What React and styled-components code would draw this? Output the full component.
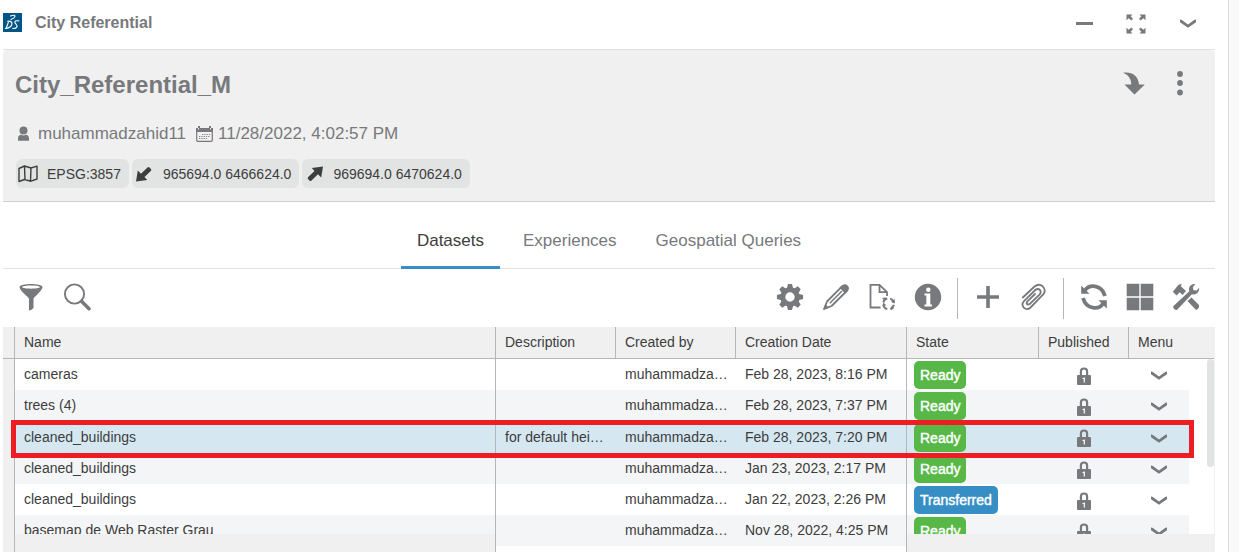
import React from "react";
import styled, { createGlobalStyle } from "styled-components";

const GlobalStyle = createGlobalStyle`
  *, *::before, *::after { box-sizing: border-box; }
  body {
    margin: 0;
    background: #f9f9f9;
    color: #3d3d3d;
    font-family: "Liberation Sans", Arial, sans-serif;
  }
`;

const Page = styled.div`
  display: flex;
  height: 100vh;
  padding-right: 10px;
  overflow: hidden;
`;

const Widget = styled.main`
  flex: 1;
  min-width: 0;
  display: flex;
  flex-direction: column;
  padding: 0 13px 0 3px;
  background: #fff;
  border-right: 1px solid #dcdcde;
`;

const TitleBar = styled.header`
  display: flex;
  align-items: center;
  height: 50px;
  padding: 0 4px 4px 0;
  border-bottom: 1px solid #e0e0e1;
`;

const WidgetTitle = styled.h1`
  flex: 1;
  margin: 0 0 0 13px;
  font-size: 16px;
  line-height: 20px;
  color: #77797c;
`;

const IconButton = styled.button`
  display: flex;
  align-items: center;
  justify-content: center;
  width: ${(p) => p.$width || 46}px;
  height: ${(p) => p.$height || 30}px;
  padding: 0;
  border: 0;
  background: none;
  color: #77797c;
  cursor: pointer;
`;

const WindowActions = styled.div`
  display: flex;
  gap: 6px;
  padding-top: 2px;
`;

const Summary = styled.section`
  padding: 17px 12px 13px;
  background: #f0f0f0;
  border-bottom: 1px solid #d0d0d2;
  border-radius: 4px 4px 0 0;
`;

const SummaryHead = styled.div`
  display: flex;
  align-items: center;
  height: 32px;
`;

const SummaryTitle = styled.h2`
  flex: 1;
  margin: 0;
  padding-top: 4px;
  font-size: 24px;
  line-height: 32px;
  color: #77797c;
`;

const Meta = styled.div`
  display: flex;
  align-items: center;
  height: 24px;
  margin-top: 23px;
  font-size: 17px;
  line-height: 24px;
  color: #77797c;
`;

const MetaItem = styled.span`
  display: flex;
  align-items: center;
  gap: 5px;
  margin-right: 10px;
`;

const Chips = styled.div`
  display: flex;
  gap: 3px;
  margin: 13px 0 0 1px;
`;

const Chip = styled.span`
  display: flex;
  align-items: center;
  gap: 9px;
  height: 29px;
  padding: 0 8px 0 2px;
  border-radius: 6px;
  background: #e2e4e3;
  font-size: 14px;
  line-height: 16px;
`;

const Tabs = styled.nav`
  display: flex;
  justify-content: center;
  gap: 7px;
  height: 67px;
  border-bottom: 1px solid #e0e0e1;
`;

const Tab = styled.button`
  height: 67px;
  padding: 14px 16px 0;
  border: 0;
  border-bottom: 3px solid ${(p) => (p.$active ? "#368ec4" : "transparent")};
  background: none;
  color: ${(p) => (p.$active ? "#3d3d3d" : "#77797c")};
  font: 17px/20px "Liberation Sans", Arial, sans-serif;
  cursor: pointer;
`;

const Toolbar = styled.div`
  display: flex;
  align-items: center;
  justify-content: space-between;
  height: 58px;
  padding: 0 6px 2px 5px;
`;

const ToolGroup = styled.div`
  display: flex;
  align-items: center;
`;

const Divider = styled.span`
  width: 1px;
  height: 41px;
  margin: 3px 7px 0 6px;
  background: #b4b6ba;
`;

const Grid = styled.div`
  position: relative;
  flex: 1;
  min-height: 0;
  display: flex;
  overflow: hidden;
  border-right: 1px solid #f0f0f0;
`;

const Gutter = styled.div`
  flex: 0 0 12px;
  background: #f0f0f0;
  border-right: 1px solid #b4b6ba;

  &::before {
    content: "";
    display: block;
    height: 32px;
    border-bottom: 1px solid #b4b6ba;
  }
`;

const GridBody = styled.div`
  flex: 1;
  min-width: 0;
`;

const Table = styled.table`
  width: 100%;
  table-layout: fixed;
  border-collapse: separate;
  border-spacing: 0;
  font-size: 14px;
  line-height: 16px;
`;

const HeadCell = styled.th`
  height: 32px;
  padding: 0 0 1px 9px;
  background: #f0f0f0;
  border-bottom: 1px solid #b4b6ba;
  border-right: ${(p) => (p.$open ? "0" : "1px solid #b4b6ba")};
  font-weight: normal;
  text-align: left;
  white-space: nowrap;
`;

const Row = styled.tr`
  height: ${(p) => (p.$selected ? 32 : 31)}px;
  --row: ${(p) => (p.$selected ? "#d5e8f2" : p.$striped ? "#f4f5f6" : "#fff")};
`;

const Cell = styled.td`
  height: inherit;
  padding: ${(p) => (p.$icon ? "2px 0 0" : "0 0 1px 9px")};
  background: var(--row);
  border-right: ${(p) => (p.$pinned ? "1px solid #b4b6ba" : "0")};
  overflow: hidden;
  text-overflow: ellipsis;
  white-space: nowrap;
`;

const StateCell = styled(Cell)`
  padding: 1px 0 0 7px;
`;

const CellCenter = styled.div`
  display: flex;
  justify-content: center;
  color: #77797c;
`;

const Spacer = styled.td`
  background: #fff;
`;

const Badge = styled.span`
  display: block;
  width: fit-content;
  height: 28px;
  padding: 0 6px;
  border-radius: 5px;
  background: ${(p) => (p.$transferred ? "#368ec4" : "#57b847")};
  color: #fff;
  font-size: 14px;
  line-height: 28px;
  -webkit-text-stroke: 0.4px #fff;
`;

const PinnedFooter = styled.div`
  position: absolute;
  bottom: 0;
  height: 18px;
  background: #f0f0f0;
`;

const LeftFooter = styled(PinnedFooter)`
  left: 12px;
  right: 718px;
  border-right: 1px solid #b4b6ba;
`;

const RightFooter = styled(PinnedFooter)`
  right: 0;
  width: 308px;
  border-left: 1px solid #b4b6ba;
`;

const ScrollThumb = styled.div`
  position: absolute;
  top: 32px;
  right: 0;
  width: 7px;
  height: 108px;
  border-radius: 4px;
  background: #e2e4e3;
`;

const Highlight = styled.div`
  position: absolute;
  top: 93px;
  left: 8px;
  right: 20px;
  height: 38px;
  border: 5px solid #ee1c23;
  pointer-events: none;
`;

const Svg = ({ w, h, children }) => (
  <svg width={w} height={h} viewBox={`0 0 ${w} ${h}`} fill="currentColor" aria-hidden="true">
    {children}
  </svg>
);

const line = { fill: "none", stroke: "currentColor" };

const Logo = () => (
  <svg width="19" height="19" viewBox="0 0 19 19" aria-hidden="true">
    <rect width="19" height="19" fill="#005686" />
    <g fill="none" stroke="#fff" strokeWidth="1.1" strokeLinecap="round">
      <path d="M7.500 3C10 2 12.500 2 11.900 3.600C11.300 5 9.500 6 8 6.600" />
      <path d="M5.300 9.500L3.200 15.300M2.300 15.500C5.500 15.500 9.200 13 9 10.500C8.800 8.700 6.500 8 4.500 8.200" />
      <path d="M15.800 7.900C13 7.400 11.200 8.300 12 9.900C13 11.500 15 12.500 13.800 14.200C12.800 15.500 11 15.600 9.800 15.400" />
    </g>
  </svg>
);

const Minus = () => <Svg w={17} h={3}><rect width="17" height="3" /></Svg>;

const Expand = () => (
  <Svg w={20} h={20}>
    <path id="corner" d="M0.500 0.500H6.500L4.800 2.300L7 4.900L5.300 6.500L2.800 4.200L0.500 6.200Z" />
    <use href="#corner" transform="translate(20 0) scale(-1 1)" />
    <use href="#corner" transform="translate(0 20) scale(1 -1)" />
    <use href="#corner" transform="translate(20 20) scale(-1 -1)" />
  </Svg>
);

const Chevron = () => (
  <Svg w={16} h={9}>
    <path d="M0 0.500Q1.200 0.400 2.200 1.300L8 5.600L13.800 1.300Q14.800 0.400 16 0.500V3.200L8 8.800L0 3.200Z" />
  </Svg>
);

const CurvedArrow = () => (
  <Svg w={22} h={23}>
    <path d="M0 0.800C7-0.800 15.500 2.500 16 12.500H21.800L11.500 22.500L1.500 12.500H8.200C8.500 7 5 2.500 0 0.800Z" />
  </Svg>
);

const Dots = () => (
  <Svg w={6} h={26}>
    <circle cx="3" cy="4" r="2.900" /><circle cx="3" cy="13" r="2.900" /><circle cx="3" cy="22.500" r="2.900" />
  </Svg>
);

const User = () => (
  <Svg w={18} h={16}>
    <circle cx="8.500" cy="4.500" r="4" />
    <path d="M3 14.800V12.500C3 10 4.500 8.800 6 8.800Q8.500 10.300 11 8.800C12.500 8.800 14 10 14 12.500V14.800Z" />
  </Svg>
);

const Calendar = () => (
  <Svg w={17} h={16}>
    <path d="M0 2H2V0H4V2H13V0H15V2H17V6H0Z" />
    <path d="M0.700 6V14.300Q0.700 15.300 1.700 15.300H15.300Q16.300 15.300 16.300 14.300V6" {...line} strokeWidth="1.200" />
    <path d="M6 8.500H14.500M3 10.500H14.500M3 12.500H11" {...line} strokeWidth="0.900" strokeDasharray="1.300 1" />
    <path d="M2.500 2V3.500M14.500 2V3.500" stroke="#f0f0f0" strokeWidth="1" />
  </Svg>
);

const MapIcon = () => (
  <Svg w={20} h={18}>
    <path d="M1 3.500L6.500 1L13 3L19 1.200V14L13 16.200L6.500 14.500L1 16.500ZM6.500 1L7 14.500M13 3L12.500 16" {...line} strokeWidth="1.400" strokeLinejoin="round" />
  </Svg>
);

const Diagonal = ({ up }) => (
  <Svg w={20} h={18}>
    <path
      transform={up ? "rotate(180 10.500 9)" : undefined}
      d="M2 16.500L3.800 5.500L7 8.700L13.500 2.500Q14.500 1.500 15.500 2.500L17 4Q17.800 5 16.800 6L10.500 12L13.200 15Z"
    />
  </Svg>
);

const Filter = () => (
  <Svg w={26} h={28}>
    <path fillRule="evenodd" d="M1.500 4C1.500 0 24.500 0 24.500 4C24.500 8 15.500 14 15.500 16V25Q13 27.500 11 27.500V16C11 14 1.500 8 1.500 4ZM4 4C5 6.200 21 6.200 22 4C21 1.900 5 1.900 4 4Z" />
  </Svg>
);

const Search = () => (
  <Svg w={28} h={28}>
    <circle cx="11.500" cy="11" r="9.600" {...line} strokeWidth="1.900" />
    <path d="M18.500 18.200L26 25.700" {...line} strokeWidth="3.600" strokeLinecap="round" />
  </Svg>
);

const Gear = () => (
  <Svg w={28} h={28}>
    <circle cx="14" cy="14" r="7.200" {...line} strokeWidth="5" />
    {[0, 45, 90, 135, 180, 225, 270, 315].map((angle) => (
      <path key={angle} transform={`rotate(${angle} 14 14)`} d="M10.800 5.500L12 0.900H16L17.200 5.500Z" />
    ))}
  </Svg>
);

const Pencil = () => (
  <Svg w={28} h={28}>
    <path d="M2.200 25.800L5 18.500L20 3.300L24.700 8L9.600 23Z" {...line} strokeWidth="1.800" strokeLinejoin="round" />
    <path d="M1 27L3.300 21L7 24.700Z" />
    <path d="M17.500 4.700L20.800 1.800Q23.200 0.200 25.600 2.500Q28 5 26.200 7.500L23.300 10.500Z" />
    <path d="M7.800 20.300L20 8" {...line} strokeWidth="1.500" />
  </Svg>
);

const FileSync = () => (
  <Svg w={28} h={28}>
    <path d="M12.500 24.500H2.500V1.800H11.500L19 9.200V13M11.500 1.800V9.200H19" {...line} strokeWidth="1.800" />
    <circle cx="20.500" cy="20.800" r="5.400" {...line} strokeWidth="1.900" strokeDasharray="5.500 3" strokeDashoffset="-1" />
    <path d="M14 15L18 14.500L17 18ZM26.800 16L23 18.800L26.800 20.500ZM26 25.500L22.800 27L23.200 23ZM14.200 23L15.500 19.500L18.500 22.500Z" />
  </Svg>
);

const Info = () => (
  <Svg w={28} h={28}>
    <circle cx="14" cy="14" r="13.200" />
    <path fill="#fff" d="M10.500 10.500H16.300V21.500H18V23.500H10.500V21.500H12.300V12.500H10.500Z" />
    <circle cx="14.300" cy="6.800" r="2.200" fill="#fff" />
  </Svg>
);

const Plus = () => (
  <Svg w={28} h={28}><path d="M3 14H25M14 3V25" {...line} strokeWidth="3.600" /></Svg>
);

const Clip = () => (
  <Svg w={28} h={28}>
    <path d="M2.800 14.500L14.500 3.500Q19 0 22.800 3.500Q26.500 7.500 23.200 11.500L10.500 24.500Q7 27.700 3.800 24.600Q1 21.500 4 18L15.500 6.800Q18 5 20 7Q21.500 9.300 19.700 11.300L9.500 21.200Q7.500 22 6.800 20.500Q6.300 19.300 7.500 18.300L15 11" {...line} strokeWidth="1.800" strokeLinecap="round" />
  </Svg>
);

const Refresh = () => (
  <Svg w={28} h={28}>
    <g id="turn">
      <path d="M4.800 7.500C9 1 21.500 1 25 13" {...line} strokeWidth="3.800" />
      <path d="M1.200 2.500V10.800H9.500L7 8.300Z" />
    </g>
    <use href="#turn" transform="rotate(180 14 14)" />
  </Svg>
);

const Tiles = () => (
  <Svg w={28} h={28}>
    <path d="M0.700 0.700H13.300V13.300H0.700ZM14.700 0.700H27.300V13.300H14.700ZM0.700 14.700H13.300V27.300H0.700ZM14.700 14.700H27.300V27.300H14.700Z" />
  </Svg>
);

const Tools = () => (
  <Svg w={28} h={28}>
    <path d="M0.800 8.800L6.500 1.800L9.800 0.800L8.800 3.200L14 8L10.500 12L7.800 9.300L4.500 12.500Z" />
    <path d="M15.500 18L19.500 14.500L27 22Q27.500 25.500 24 27Z" />
    <path d="M1.200 23.200L17.300 8.300Q15.800 3.300 20.500 1.200L23.500 1L20.800 4.300L21.500 7.200L24.700 7.500L27.200 4.800Q27.600 10 22.500 11.600L19.900 11.300L4.900 27Q1.200 27 1.200 23.200Z" />
  </Svg>
);

const Lock = () => (
  <Svg w={14} h={18}>
    <path d="M3.900 9V4.500Q3.900 1.500 7 1.500Q10.100 1.500 10.100 4.500V9" {...line} strokeWidth="2.200" />
    <rect y="8" width="14" height="10" rx="1" />
    <path d="M7.300 10.500V15.500M5.500 11.500H7.300" stroke="#fff" strokeWidth="1.200" />
  </Svg>
);

const tabs = ["Datasets", "Experiences", "Geospatial Queries"];

const columns = [
  { label: "Name" },
  { label: "Description", width: 120 },
  { label: "Created by", width: 120 },
  { label: "Creation Date", width: 171 },
  { label: "State", width: 132 },
  { label: "Published", width: 90 },
  { label: "Menu", width: 60 },
];

const rows = [
  { name: "cameras", date: "Feb 28, 2023, 8:16 PM", state: "Ready" },
  { name: "trees (4)", date: "Feb 28, 2023, 7:37 PM", state: "Ready" },
  { name: "cleaned_buildings", description: "for default hei…", date: "Feb 28, 2023, 7:20 PM", state: "Ready", selected: true },
  { name: "cleaned_buildings", date: "Jan 23, 2023, 2:17 PM", state: "Ready" },
  { name: "cleaned_buildings", date: "Jan 22, 2023, 2:26 PM", state: "Transferred" },
  { name: "basemap de Web Raster Grau", date: "Nov 28, 2022, 4:25 PM", state: "Ready" },
];

const Tool = ({ label, icon: Icon }) => (
  <IconButton type="button" aria-label={label}><Icon /></IconButton>
);

export default function App() {
  return (
    <>
      <GlobalStyle />
      <Page>
        <Widget>
          <TitleBar>
            <Logo />
            <WidgetTitle>City Referential</WidgetTitle>
            <WindowActions>
              <Tool label="Minimize" icon={Minus} />
              <Tool label="Full screen" icon={Expand} />
              <Tool label="Widget menu" icon={Chevron} />
            </WindowActions>
          </TitleBar>

          <Summary>
            <SummaryHead>
              <SummaryTitle>City_Referential_M</SummaryTitle>
              <Tool label="Collapse details" icon={CurvedArrow} />
              <Tool label="More actions" icon={Dots} />
            </SummaryHead>
            <Meta>
              <MetaItem><User />muhammadzahid11</MetaItem>
              <MetaItem><Calendar />11/28/2022, 4:02:57 PM</MetaItem>
            </Meta>
            <Chips>
              <Chip><MapIcon />EPSG:3857</Chip>
              <Chip><Diagonal />965694.0 6466624.0</Chip>
              <Chip><Diagonal up />969694.0 6470624.0</Chip>
            </Chips>
          </Summary>

          <Tabs role="tablist">
            {tabs.map((tab, i) => (
              <Tab key={tab} type="button" role="tab" aria-selected={i === 0} $active={i === 0}>{tab}</Tab>
            ))}
          </Tabs>

          <Toolbar>
            <ToolGroup>
              <Tool label="Filter" icon={Filter} />
              <Tool label="Search" icon={Search} />
            </ToolGroup>
            <ToolGroup>
              <Tool label="Settings" icon={Gear} />
              <Tool label="Edit" icon={Pencil} />
              <Tool label="Update file" icon={FileSync} />
              <Tool label="Information" icon={Info} />
              <Divider />
              <Tool label="Add" icon={Plus} />
              <Tool label="Attach" icon={Clip} />
              <Divider />
              <Tool label="Refresh" icon={Refresh} />
              <Tool label="Tile view" icon={Tiles} />
              <Tool label="Tools" icon={Tools} />
            </ToolGroup>
          </Toolbar>

          <Grid>
            <Gutter />
            <GridBody>
              <Table>
                <colgroup>
                  {columns.map((c) => <col key={c.label} width={c.width} />)}
                  <col width="25" />
                </colgroup>
                <thead>
                  <tr>
                    {columns.map((c) => (
                      <HeadCell key={c.label} scope="col" $open={c.label === "Menu"}>{c.label}</HeadCell>
                    ))}
                    <HeadCell as="td" $open />
                  </tr>
                </thead>
                <tbody>
                  {rows.map((row, i) => (
                    <Row key={row.date} $selected={row.selected} $striped={i % 2 === 1}>
                      <Cell $pinned>{row.name}</Cell>
                      <Cell>{row.description}</Cell>
                      <Cell>muhammadza…</Cell>
                      <Cell $pinned>{row.date}</Cell>
                      <StateCell><Badge $transferred={row.state === "Transferred"}>{row.state}</Badge></StateCell>
                      <Cell $icon><CellCenter><Lock /></CellCenter></Cell>
                      <Cell $icon>
                        <CellCenter>
                          <IconButton type="button" aria-label="Row menu" $width={30} $height={20}><Chevron /></IconButton>
                        </CellCenter>
                      </Cell>
                      <Spacer />
                    </Row>
                  ))}
                </tbody>
              </Table>
            </GridBody>
            <LeftFooter />
            <RightFooter />
            <ScrollThumb />
            <Highlight />
          </Grid>
        </Widget>
      </Page>
    </>
  );
}
